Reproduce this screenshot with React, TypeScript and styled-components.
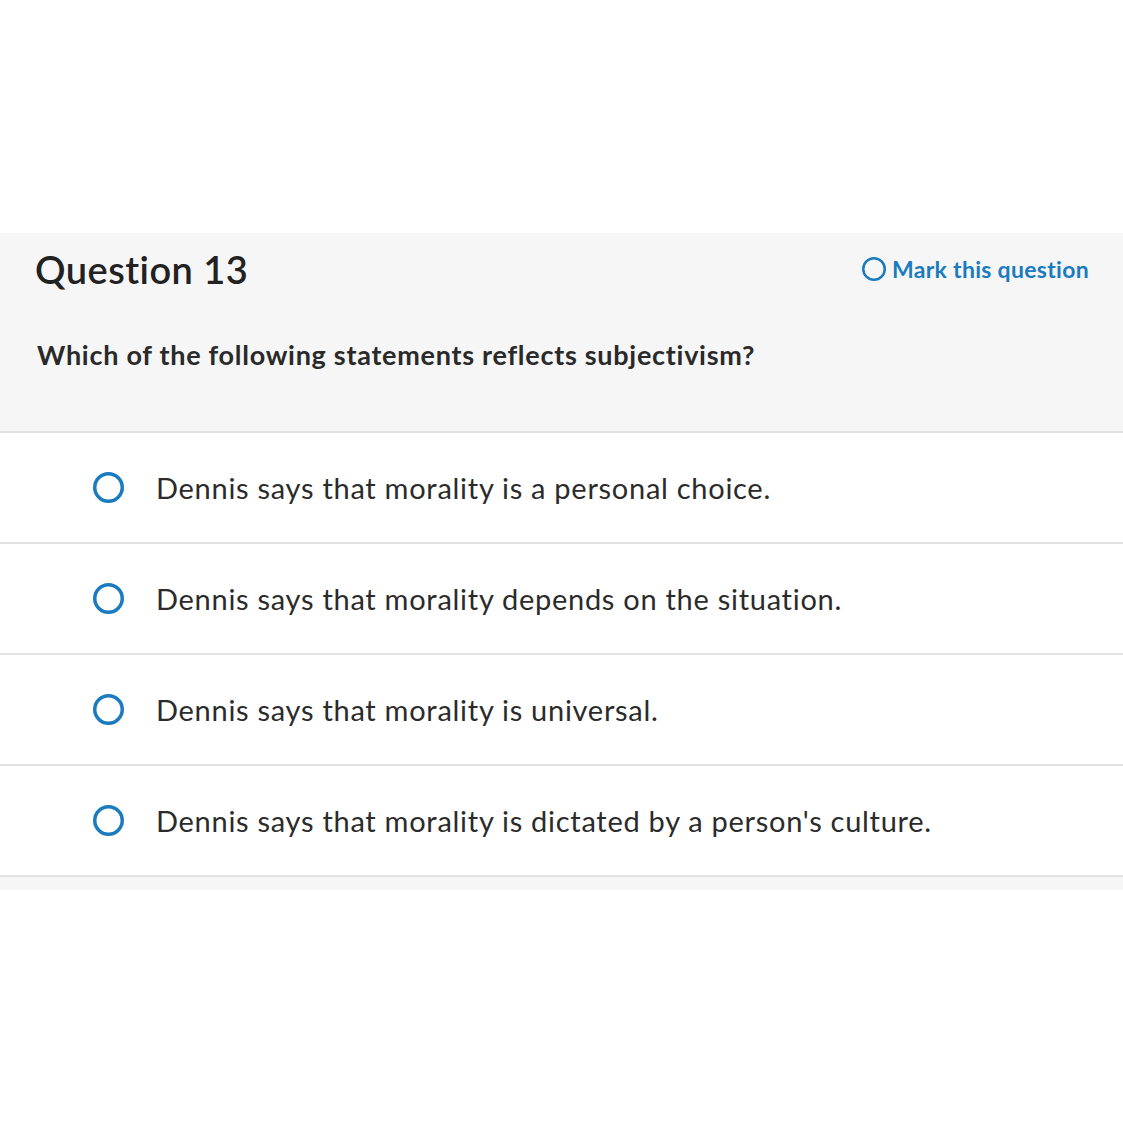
import styled, { createGlobalStyle } from "styled-components";

const GlobalStyle = createGlobalStyle`
  html, body {
    margin: 0;
    padding: 0;
    background: #ffffff;
    font-family: "Lato", "Liberation Sans", sans-serif;
  }
`;

const Page = styled.div`
  padding-top: 233px;
  width: 1123px;
`;

const Card = styled.section`
  background: #f6f6f6;
  padding-bottom: 13px;
`;

const Header = styled.div`
  padding: 0 34px 0 35px;
  height: 200px;
  box-sizing: border-box;
  border-bottom: 2px solid #e2e2e2;
`;

const TitleRow = styled.div`
  display: flex;
  justify-content: space-between;
  align-items: center;
  height: 72px;
`;

const Title = styled.h2`
  margin: 0;
  font-size: 38px;
  font-weight: 600;
  color: #222222;
  letter-spacing: 0.45px;
`;

const MarkButton = styled.button`
  display: flex;
  align-items: center;
  gap: 6px;
  border: none;
  background: none;
  padding: 0;
  font-family: inherit;
  font-size: 23px;
  font-weight: 700;
  color: #1a7bbf;
  letter-spacing: 0.3px;
  cursor: pointer;
`;

const Prompt = styled.p`
  margin: 33px 0 0 2px;
  font-size: 27px;
  font-weight: 700;
  color: #2a2a2a;
  letter-spacing: 0.72px;
`;

const Options = styled.ul`
  list-style: none;
  margin: 0;
  padding: 0;
  background: #ffffff;
`;

const Option = styled.li`
  display: flex;
  align-items: center;
  height: 109px;
  border-bottom: 2px solid #e2e2e2;
  padding-left: 93px;
  gap: 32px;
`;

const Label = styled.span`
  font-size: 29px;
  color: #2b2b2b;
  letter-spacing: 0.72px;
`;

function Ring({ size, stroke }: { size: number; stroke: number }) {
  const r = size / 2 - stroke / 2;
  return (
    <svg width={size} height={size} viewBox={`0 0 ${size} ${size}`}>
      <circle
        cx={size / 2}
        cy={size / 2}
        r={r}
        fill="none"
        stroke="#1a7bbf"
        strokeWidth={stroke}
      />
    </svg>
  );
}

const choices = [
  "Dennis says that morality is a personal choice.",
  "Dennis says that morality depends on the situation.",
  "Dennis says that morality is universal.",
  "Dennis says that morality is dictated by a person's culture.",
];

export default function App() {
  return (
    <Page>
      <GlobalStyle />
      <Card>
        <Header>
          <TitleRow>
            <Title>Question 13</Title>
            <MarkButton>
              <Ring size={24} stroke={2.5} />
              Mark this question
            </MarkButton>
          </TitleRow>
          <Prompt>Which of the following statements reflects subjectivism?</Prompt>
        </Header>
        <Options>
          {choices.map((c) => (
            <Option key={c}>
              <Ring size={31} stroke={3.5} />
              <Label>{c}</Label>
            </Option>
          ))}
        </Options>
      </Card>
    </Page>
  );
}
